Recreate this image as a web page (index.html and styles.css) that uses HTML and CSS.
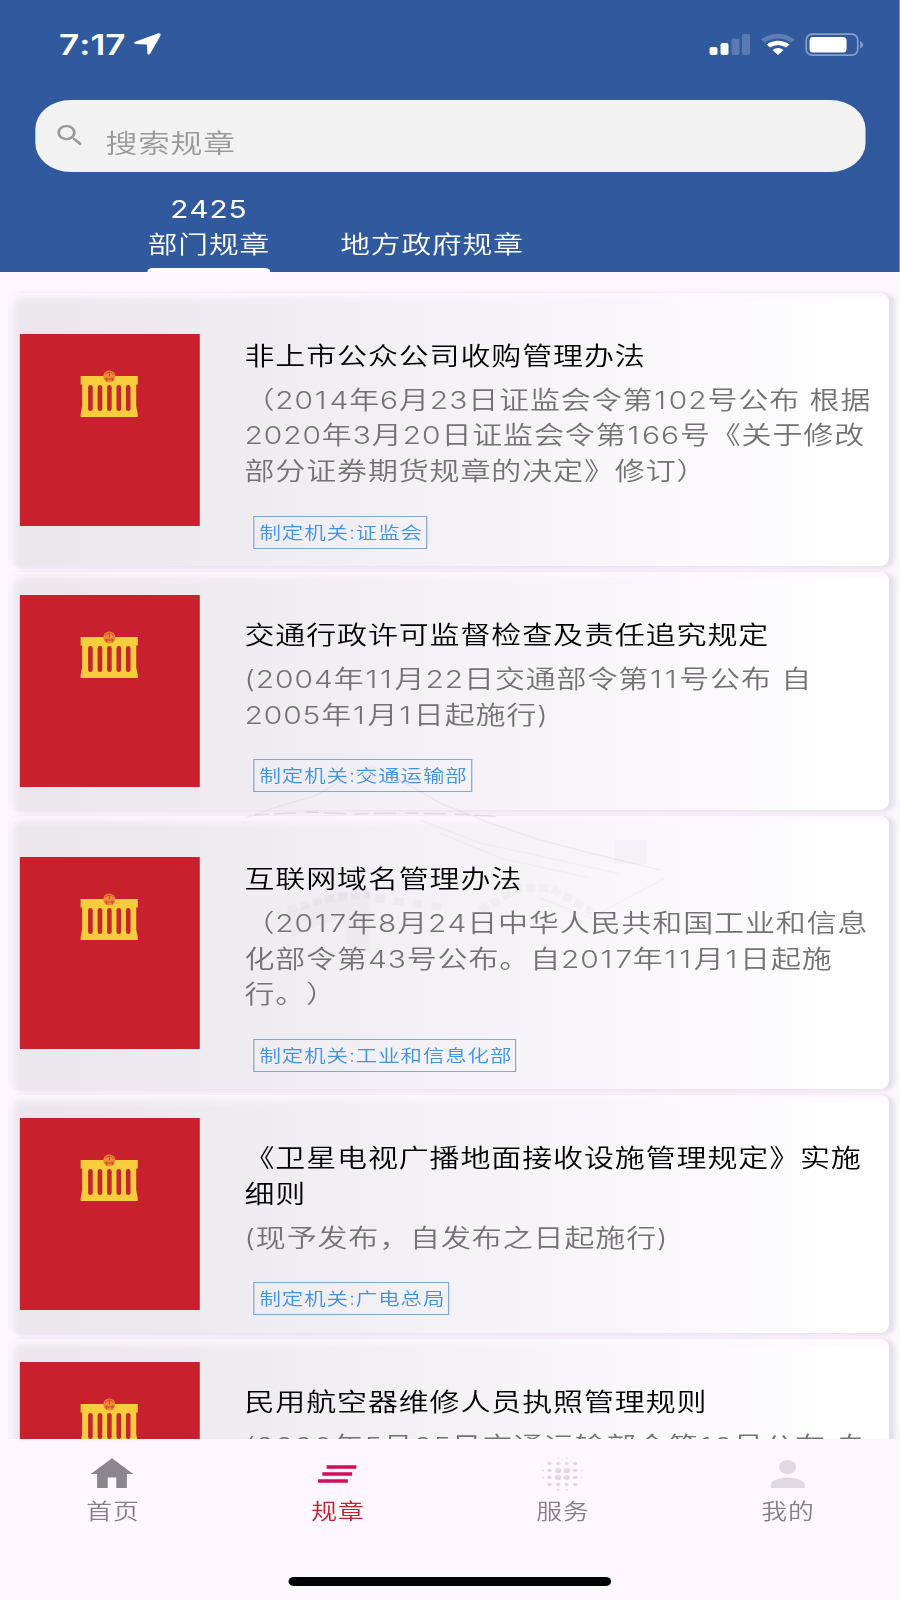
FILE: index.html
```html
<!DOCTYPE html>
<html lang="zh-CN">
<head>
<meta charset="utf-8">
<title>规章</title>
<link rel="stylesheet" href="styles.css">
</head>
<body>
<svg class="defs" width="0" height="0">
  <symbol id="cover" viewBox="0 0 180 192" preserveAspectRatio="none">
    <rect width="180" height="192" fill="#c8202d"/>
    <path fill="#f6ce3c" d="M61 42h57v8.500h-1.500v22l1.500 7.500v3h-57v-3l1.500-7.500v-22h-1.500z"/>
    <g fill="#c3262d">
      <rect x="68.500" y="51" width="4.600" height="26" rx="2.300"/>
      <rect x="78" y="51" width="4.600" height="26" rx="2.300"/>
      <rect x="87.400" y="51" width="4.600" height="26" rx="2.300"/>
      <rect x="96.800" y="51" width="4.600" height="26" rx="2.300"/>
      <rect x="106.200" y="51" width="4.600" height="26" rx="2.300"/>
    </g>
    <ellipse cx="89.700" cy="42.500" rx="6" ry="6" fill="#ef8b35"/>
    <path d="M85.500 40.500q4-5 8.500 0M89.700 38.500v4M85 45h9.500M87 43.500v4M92.500 43.500v4" fill="none" stroke="#c84a28" stroke-width="1"/>
  </symbol>
</svg>
<div class="screen">
  <header class="header">
    <div class="status">
      <span class="time">7:17</span>
      <svg class="arrow" viewBox="0 0 27 22" preserveAspectRatio="none"><path d="M24.500.300 1.300 8.700q-2.600 1.600.5 2.200l10.500.6q.9 0 .9.900l.2 7.600q.6 3.200 3 .6L26.800 2.300q.6-2.400-2.300-2z" fill="#fff"/></svg>
      <svg class="gauges" viewBox="0 0 156 24" preserveAspectRatio="none">
        <g fill="#fff">
          <rect x="1" y="14" width="8" height="8" rx="2"/><rect x="12" y="10" width="8" height="12" rx="2"/>
          <g opacity=".2"><rect x="23" y="5.500" width="8" height="16.500" rx="2"/><rect x="33.500" y="1" width="8" height="21" rx="2"/></g>
          <path d="M52.500 6.500Q69.500-5 86.500 6.500L83 9.500Q69.500 1.500 56 9.500z" opacity=".22"/>
          <path d="M58 11.500Q69.500 4 81 11.500L77.500 14.500Q69.500 9.500 61.500 14.500z"/>
          <path d="M64 17Q69.500 13 75 17L69.500 22z"/>
          <rect x="101" y="4" width="37" height="15.500" rx="3.500"/>
          <path d="M151.500 8q3.200 1.500 3.200 3.700t-3.200 3.700z" opacity=".4"/>
        </g>
        <rect x="97.700" y="1.200" width="51.500" height="21" rx="6" fill="none" stroke="#fff" stroke-opacity=".42" stroke-width="1.700"/>
      </svg>
    </div>
    <div class="search">
      <svg class="lens" viewBox="3 3 17.500 17.500" preserveAspectRatio="none"><path fill="#9a9a9a" d="M15.500 14h-.79l-.28-.27C15.410 12.590 16 11.110 16 9.500 16 5.910 13.090 3 9.500 3S3 5.910 3 9.500 5.910 16 9.500 16c1.610 0 3.090-.59 4.230-1.570l.27.28v.79l5 4.990L20.490 19l-4.990-5zm-6 0C7.010 14 5 11.990 5 9.500S7.010 5 9.500 5 14 7.010 14 9.500 11.990 14 9.500 14z"/></svg>
      <span class="placeholder">搜索规章</span>
    </div>
    <nav class="tabs">
      <div class="tab active"><span class="count">2425</span><span>部门规章</span></div>
      <div class="tab"><span>地方政府规章</span></div>
    </nav>
  </header>

  <main class="list">
    <article class="card">
      <svg class="cover"><use href="#cover"/></svg>
      <div class="info">
        <h2 class="title">非上市公众公司收购管理办法</h2>
        <p class="desc">（20<span class="n">1</span>4年6月23日证监会令第<span class="n">1</span>02号公布 根据<br>2020年3月20日证监会令第<span class="n">1</span>66号《关于修改<br>部分证券期货规章的决定》修订）</p>
        <span class="tag">制定机关:证监会</span>
      </div>
    </article>
    <article class="card">
      <svg class="cover"><use href="#cover"/></svg>
      <div class="info">
        <h2 class="title">交通行政许可监督检查及责任追究规定</h2>
        <p class="desc">(2004年<span class="n">11</span>月22日交通部令第<span class="n">11</span>号公布 自<br>2005年<span class="n">1</span>月<span class="n">1</span>日起施行)</p>
        <span class="tag">制定机关:交通运输部</span>
      </div>
    </article>
    <article class="card">
      <svg class="cover"><use href="#cover"/></svg>
      <div class="info">
        <h2 class="title">互联网域名管理办法</h2>
        <p class="desc">（20<span class="n">1</span>7年8月24日中华人民共和国工业和信息<br>化部令第43号公布。自20<span class="n">1</span>7年<span class="n">11</span>月<span class="n">1</span>日起施<br>行。）</p>
        <span class="tag">制定机关:工业和信息化部</span>
      </div>
    </article>
    <article class="card">
      <svg class="cover"><use href="#cover"/></svg>
      <div class="info">
        <h2 class="title">《卫星电视广播地面接收设施管理规定》实施<br>细则</h2>
        <p class="desc">(现予发布，自发布之日起施行)</p>
        <span class="tag">制定机关:广电总局</span>
      </div>
    </article>
    <article class="card">
      <svg class="cover"><use href="#cover"/></svg>
      <div class="info">
        <h2 class="title">民用航空器维修人员执照管理规则</h2>
        <p class="desc">(2020年5月25日交通运输部令第<span class="n">1</span>0号公布 自</p>
      </div>
    </article>
    <svg class="watermark" viewBox="0 0 450 210" preserveAspectRatio="none">
      <g fill="none" stroke="#8a8590" stroke-width="1.500">
        <path d="M5 60 40 48 75 38 110 18 132 8 160 22 200 45 250 65 300 82 350 95 420 112" opacity=".09"/>
        <path d="M15 57 70 54 110 56 165 55 215 56 265 59" opacity=".2" stroke-dasharray="14 5 22 9"/>
        <path d="M180 62 240 85 300 98 380 116M200 75 260 100 350 120M425 120 350 160 300 140" opacity=".05"/>
        <path d="M48 152 90 140 130 136M240 152l40-22 30 0 42 24" stroke-width="8" stroke-dasharray="9 4" opacity=".05"/>
        <path d="M135 140 210 150" stroke-width="8" stroke-dasharray="10 9" opacity=".05"/>
      </g>
      <g fill="#8a8590" opacity=".04">
        <rect x="374" y="82" width="32" height="24"/>
        <path d="M95 134h35v60h-20l-8-35-50 20-8-22z"/>
      </g>
    </svg>
  </main>

  <nav class="bottom">
    <div class="items">
      <div class="item">
        <svg viewBox="0 0 24 24"><path fill="#8b858e" d="M10 20v-6h4v6h5v-8h3L12 3 2 12h3v8z"/></svg>
        <span>首页</span>
      </div>
      <div class="item current">
        <svg viewBox="0 0 24 24"><path fill="#d20c5c" d="M5 13h14v-2H5v2zm-2 4h14v-2H3v2zM7 7v2h14V7H7z"/></svg>
        <span>规章</span>
      </div>
      <div class="item">
        <svg viewBox="0 0 24 24"><g fill="#dfd9e1">
          <circle cx="10" cy="10" r="1.500"/><circle cx="14" cy="10" r="1.500"/><circle cx="10" cy="14" r="1.500"/><circle cx="14" cy="14" r="1.500"/>
          <circle cx="6" cy="6" r="1"/><circle cx="10" cy="6" r="1"/><circle cx="14" cy="6" r="1"/><circle cx="18" cy="6" r="1"/>
          <circle cx="6" cy="18" r="1"/><circle cx="10" cy="18" r="1"/><circle cx="14" cy="18" r="1"/><circle cx="18" cy="18" r="1"/>
          <circle cx="6" cy="10" r="1"/><circle cx="6" cy="14" r="1"/><circle cx="18" cy="10" r="1"/><circle cx="18" cy="14" r="1"/>
          <circle cx="10" cy="3" r=".5"/><circle cx="14" cy="3" r=".5"/><circle cx="10" cy="21" r=".5"/><circle cx="14" cy="21" r=".5"/>
          <circle cx="3" cy="10" r=".5"/><circle cx="3" cy="14" r=".5"/><circle cx="21" cy="10" r=".5"/><circle cx="21" cy="14" r=".5"/>
        </g></svg>
        <span>服务</span>
      </div>
      <div class="item">
        <svg viewBox="0 0 24 24"><path fill="#dfd9e1" d="M12 12c2.210 0 4-1.790 4-4s-1.790-4-4-4-4 1.790-4 4 1.790 4 4 4zm0 2c-2.670 0-8 1.340-8 4v2h16v-2c0-2.660-5.330-4-8-4z"/></svg>
        <span>我的</span>
      </div>
    </div>
    <div class="home-bar"></div>
  </nav>
</div>
</body>
</html>
```
FILE: styles.css
```css
* { box-sizing: border-box; }
html, body { margin: 0; }
body {
  width: 900px;
  height: 1600px;
  overflow: hidden;
  background: #fef7ff;
}
.defs { display: block; }

.screen {
  width: 739.3px;
  height: 1600px;
  display: flex;
  flex-direction: column;
  transform: scaleX(1.21737);
  transform-origin: 0 0;
  font-family: Inter, "Noto Sans CJK SC DemiLight", "Noto Sans CJK SC", sans-serif;
  font-weight: 350;
  font-size: 24.6px;
  letter-spacing: .76px;
  line-height: 35.7px;
  font-kerning: none;
  font-feature-settings: "calt" 0;
  white-space: nowrap;
  text-spacing-trim: space-all;
}

.header {
  flex: none;
  height: 272px;
  background: #31599e;
  color: #fff;
  display: flex;
  flex-direction: column;
}
.status {
  height: 100px;
  padding: 33px 29.400px 0 48.500px;
  display: flex;
  align-items: flex-start;
}
.time {
  width: 61.500px;
  font-size: 28.800px;
  font-weight: 600;
  line-height: 24px;
  letter-spacing: 0;
}
.arrow { width: 22.200px; height: 22px; }
.gauges { width: 128.200px; height: 24px; margin-left: auto; }

.search {
  height: 71.500px;
  margin: 0 28.600px 0 28.500px;
  padding-left: 18.400px;
  border-radius: 29px;
  background: #f2f2f2;
  color: #9a9a9a;
  display: flex;
}
.lens { width: 20.500px; height: 20.500px; margin-top: 25px; }
.placeholder {
  margin-left: 19.200px;
  font-size: 26.200px;
  letter-spacing: .6px;
  line-height: 88px;
}

.tabs {
  flex: 1;
  padding-left: 121.300px;
  display: flex;
  align-items: flex-end;
  gap: 57.500px;
}
.tab {
  display: flex;
  flex-direction: column;
  align-items: center;
  padding-bottom: 9px;
  font-size: 24.400px;
}
.count { font-weight: 400; }
.active { padding-bottom: 0; }
.active::after {
  content: "";
  align-self: stretch;
  height: 4.500px;
  margin-top: 4.500px;
  border-radius: 4px 4px 0 0;
  background: #fff;
}

.list {
  flex: none;
  height: 1167px;
  padding: 21px 9px 0 6.600px;
  overflow: hidden;
  position: relative;
  display: flex;
  flex-direction: column;
  gap: 5.900px;
}
.card {
  flex: none;
  min-height: 238px;
  padding: 45.500px 0 17.500px 9.800px;
  border-radius: 8px;
  background: linear-gradient(90deg, #ebe7ed 6%, #efecf1 26%, #f5f3f7 55%, #fbf9fc 80%, #fff 96%);
  box-shadow: inset 4px 5px 7px #fdf7fe, 4px 1px 4px 1px rgba(100, 85, 105, .15);
  display: flex;
  gap: 36.600px;
}
.cover {
  flex: none;
  width: 148.200px;
  height: 192px;
  align-self: center;
  margin: -30.500px 0 -2.500px;
}
.info {
  margin-left: -.4px;
  display: flex;
  flex-direction: column;
  align-items: flex-start;
}
.title {
  margin: 0;
  font-size: inherit;
  font-weight: 350;
  color: #000;
}
.desc { margin: 8.500px 0 26px; color: #747276; }
/* The figure 1 is narrow; it gets a little more room on both sides. */
.n { margin-left: .7px; letter-spacing: 2.300px; }
.tag {
  height: 33px;
  margin-left: 7.400px;
  padding: 0 2.600px 0 4px;
  border: 1px solid #86a6cb;
  color: #3f93e6;
  font-size: 17.600px;
  line-height: 32px;
}
.watermark {
  position: absolute;
  left: 197px;
  top: 486px;
  width: 370px;
  height: 210px;
}

.bottom {
  flex: 1;
  background: #fef7ff;
  display: flex;
  flex-direction: column;
  align-items: center;
}
.items { width: 100%; display: flex; padding-top: 14px; }
.item {
  flex: 1;
  display: flex;
  flex-direction: column;
  align-items: center;
  color: #858087;
  font-size: 21.200px;
  line-height: 32px;
}
.item span { padding-left: .7px; }
.item svg { width: 42px; height: 42px; }
.current { color: #c4202e; }
.home-bar {
  width: 264.500px;
  height: 9.500px;
  margin-top: 49.500px;
  border-radius: 5px;
  background: #000;
}
```
